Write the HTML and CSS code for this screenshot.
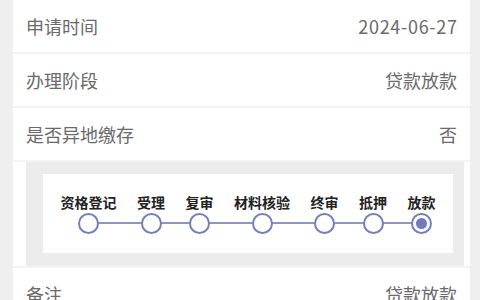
FILE: index.html
```html
<!DOCTYPE html>
<html lang="zh-CN">
<head>
    <meta charset="UTF-8">
    <meta name="viewport" content="width=device-width, initial-scale=1.0">
    <title>贷款进度</title>
    <link rel="stylesheet" href="styles.css">
</head>
<body>
    <div class="card">
        <div class="row">
            <span class="label">申请时间</span>
            <span class="value date">2024-06-27</span>
        </div>
        <div class="row">
            <span class="label">办理阶段</span>
            <span class="value">贷款放款</span>
        </div>
        <div class="row">
            <span class="label">是否异地缴存</span>
            <span class="value">否</span>
        </div>
        <div class="row-steps">
            <div class="steps-box">
                <div class="steps-inner">
                    <div class="steps">
                        <div class="step"><span class="step-name">资格登记</span><span class="dot"></span></div>
                        <div class="step"><span class="step-name">受理</span><span class="dot"></span></div>
                        <div class="step"><span class="step-name">复审</span><span class="dot"></span></div>
                        <div class="step"><span class="step-name">材料核验</span><span class="dot"></span></div>
                        <div class="step"><span class="step-name">终审</span><span class="dot"></span></div>
                        <div class="step"><span class="step-name">抵押</span><span class="dot"></span></div>
                        <div class="step current"><span class="step-name">放款</span><span class="dot"></span></div>
                    </div>
                </div>
            </div>
        </div>
        <div class="row">
            <span class="label">备注</span>
            <span class="value">贷款放款</span>
        </div>
    </div>
</body>
</html>
```

FILE: styles.css
```css
body {
    margin: 0;
    padding: 0 10px 0 13px;
    background-color: #efefef;
    font-family: "Noto Sans CJK SC", "Noto Sans", sans-serif;
}
.card {
    background-color: #fff;
}
.row {
    height: 52px;
    display: flex;
    justify-content: space-between;
    align-items: center;
    padding: 0 13px;
    border-bottom: 2px solid #f3f3f3;
    font-size: 18px;
    color: #6a6a6a;
}
.row:last-child {
    border-bottom: none;
}
.date {
    letter-spacing: 0.7px;
    margin-right: -0.7px;
}
.row-steps {
    padding: 0 6px 0 13px;
    border-bottom: 2px solid #f3f3f3;
}
.steps-box {
    background-color: #ececec;
    padding: 12px 11px 13px 17px;
}
.steps-inner {
    background-color: #fff;
    height: 79px;
    display: flex;
    justify-content: center;
    padding-top: 19px;
    box-sizing: border-box;
}
.steps {
    position: relative;
    display: flex;
    gap: 20.5px;
    height: 42px;
}
.steps::before {
    content: "";
    position: absolute;
    left: 28px;
    right: 14px;
    top: 29px;
    height: 2px;
    background-color: #8c96c9;
}
.step {
    display: flex;
    flex-direction: column;
    align-items: center;
}
.step-name {
    font-size: 14px;
    font-weight: bold;
    line-height: 18px;
    color: #222;
    white-space: nowrap;
}
.dot {
    position: relative;
    margin-top: 2px;
    width: 21px;
    height: 21px;
    box-sizing: border-box;
    border: 2px solid #7380bd;
    border-radius: 50%;
    background-color: #fff;
    display: flex;
    justify-content: center;
    align-items: center;
}
.current .dot::after {
    content: "";
    width: 11px;
    height: 11px;
    border-radius: 50%;
    background-color: #6f7bbb;
}
```
